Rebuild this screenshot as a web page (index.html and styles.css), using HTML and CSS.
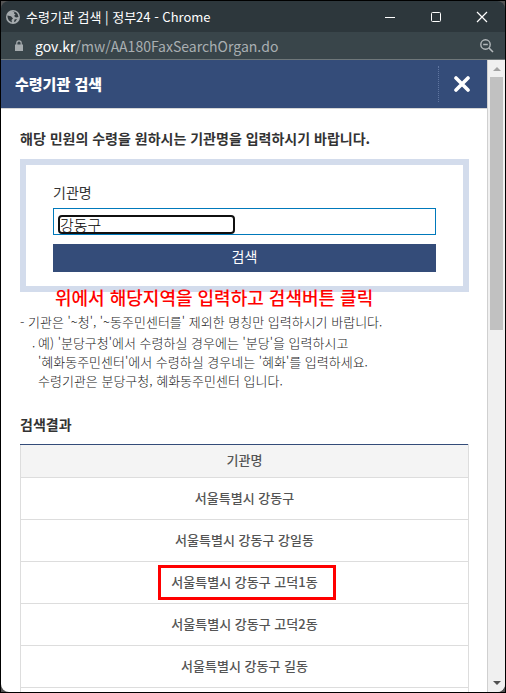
FILE: index.html
```html
<!doctype html>
<html lang="ko">
<head>
  <meta charset="UTF-8">
  <title>수령기관 검색 | 정부24</title>
  <link rel="stylesheet" href="styles.css">
</head>
<body>
  <div class="window">
    <div class="titlebar">
      <svg class="globe" width="14" height="14" viewBox="0 0 14 14">
        <circle cx="7" cy="7" r="7" fill="#a5abae"/>
        <path d="M1.500 5.500L5 6.200L7 8.500L5.500 10L6 12.500Q2 11 1.500 7zM6 1.500L8.500 1.500L8 3.500L9.500 4.500L8 6L10 7.500L12.500 7Q12.500 4 10 2.200zM8.500 9.500L11 9L9.500 11.500L8 12z" fill="#30393e"/>
      </svg>
      <span class="caption">수령기관 검색 | 정부24 - Chrome</span>
      <div class="controls">
        <button type="button" aria-label="최소화"><svg width="12" height="12" viewBox="0 0 12 12"><path d="M1 6.500H11" stroke="#fff"/></svg></button>
        <button type="button" aria-label="최대화"><svg width="12" height="12" viewBox="0 0 12 12"><rect x="1.500" y="1.500" width="9" height="9" rx="1" fill="none" stroke="#fff"/></svg></button>
        <button type="button" aria-label="창 닫기"><svg width="12" height="12" viewBox="0 0 12 12"><path d="M1 1L11 11M11 1L1 11" stroke="#fff" stroke-width="1.200"/></svg></button>
      </div>
    </div>
    <div class="address">
      <svg width="8" height="12" viewBox="0 0 8 12"><path d="M0 4.500h8v6.500h-8z" fill="#a5abae"/><path d="M1.800 5V3a2.200 2.200 0 0 1 4.400 0v2" fill="none" stroke="#a5abae" stroke-width="1.200"/></svg>
      <span class="url"><b>gov.kr</b>/mw/AA180FaxSearchOrgan.do</span>
      <svg class="zoom" width="14" height="14" viewBox="0 0 14 14"><circle cx="5.500" cy="5.500" r="4.700" fill="none" stroke="#b4b9bc" stroke-width="1.400"/><path d="M3.200 5.500h4.600M9 9l4 4" stroke="#b4b9bc" stroke-width="1.600"/></svg>
    </div>

    <div class="view">
      <div class="page">
        <header class="head">
          <h1>수령기관 검색</h1>
          <button type="button" class="close" aria-label="닫기"><svg width="16" height="16" viewBox="0 0 16 16"><path d="M2 2L14 14M14 2L2 14" stroke="#fff" stroke-width="3.600" stroke-linecap="round"/></svg></button>
        </header>
        <main class="content">
          <h2>해당 민원의 수령을 원하시는 기관명을 입력하시기 바랍니다.</h2>
          <form class="search">
            <label for="organ">기관명</label>
            <div class="field"><input type="text" id="organ" value="강동구"></div>
            <button type="button" class="btn">검색</button>
            <p class="memo">위에서 해당지역을 입력하고 검색버튼 클릭</p>
          </form>
          <div class="guide">
            <p>- 기관은 '~청', '~동주민센터를' 제외한 명칭만 입력하시기 바랍니다.</p>
            <p class="sub">예) '분당구청'에서 수령하실 경우에는 '분당'을 입력하시고<br>'혜화동주민센터'에서 수령하실 경우네는 '혜화'를 입력하세요.<br>수령기관은 분당구청, 혜화동주민센터 입니다.</p>
          </div>
          <h2 class="result">검색결과</h2>
          <table class="list">
            <thead>
              <tr><th>기관명</th></tr>
            </thead>
            <tbody>
              <tr><td>서울특별시 강동구</td></tr>
              <tr><td>서울특별시 강동구 강일동</td></tr>
              <tr><td><span class="mark">서울특별시 강동구 고덕1동</span></td></tr>
              <tr><td>서울특별시 강동구 고덕2동</td></tr>
              <tr><td>서울특별시 강동구 길동</td></tr>
              <tr><td></td></tr>
            </tbody>
          </table>
        </main>
      </div>
      <div class="scroll">
        <i class="up"></i>
        <div class="thumb"></div>
        <i class="down"></i>
      </div>
    </div>
  </div>
</body>
</html>
```
FILE: styles.css
```css
*{margin:0;
  padding:0;
  box-sizing:border-box;}
body{background:#555;
     color:#333;
     font-family:"Noto Sans CJK KR",sans-serif;}
button{border:0;
       background:none;
       font-family:inherit;}
svg{display:block;}

/* 브라우저 창 */
.window{height:100vh;
        display:flex;
        flex-direction:column;
        border:1px solid #000;
        overflow:hidden;}
.titlebar{flex:none;
          height:31px;
          display:flex;
          align-items:center;
          padding-left:5px;
          background:#2d373c;
          border-top-right-radius:8px;
          border-top-left-radius:8px;}
.caption{flex:1;
         margin-left:6px;
         color:#fff;
         font:13px/20px "Noto Sans CJK KR",sans-serif;}
.controls{display:flex;}
.controls button{width:46px;
                 height:28px;
                 display:flex;
                 align-items:center;
                 justify-content:center;}
.address{flex:none;
         height:28px;
         display:flex;
         align-items:center;
         padding:0 11px 0 14px;
         background:#39454a;
         border-bottom:1px solid #6f7779;}
.url{flex:1;
     margin-left:12px;
     color:#a9afb2;
     font:14px/20px "Noto Sans CJK KR",sans-serif;}
.url b{color:#fff;
       font-weight:normal;}

.view{flex:1;
      min-height:0;
      display:flex;
      background:#fff;
      border-radius:0 0 8px 8px;
      overflow:hidden;}
.page{flex:1;
      overflow:hidden;}

/* 스크롤바 */
.scroll{width:18px;
        display:flex;
        flex-direction:column;
        align-items:center;
        background:#f0f0f0;
        border-left:1px solid #d0d0d0;}
.up,.down{border:4px solid transparent;}
.up{margin-top:3px;
    border-bottom-color:#a3a3a3;}
.thumb{width:13px;
       height:40%;
       margin-top:6px;
       background:#c1c1c1;}
.down{margin-top:auto;
      margin-bottom:3px;
      border-top-color:#505050;}

.head{height:49px;
      display:flex;
      align-items:center;
      justify-content:space-between;
      padding-left:14px;
      background:#344c79;
      border-bottom:1px solid #d5d5d5;}
.head h1{color:#fff;
         font-size:15px;
         font-weight:900;
         line-height:24px;}
.close{width:49px;
       height:36px;
       display:flex;
       align-items:center;
       justify-content:center;
       padding-right:3px;
       border-left:1px dotted #5f75a0;}

.content{padding:17px 18px 0 19px;}
.content h2{font-size:14px;
            line-height:24px;}
.search{position:relative;
        display:flex;
        flex-direction:column;
        margin-top:9px;
        padding:17px 27px 14px;
        border:6px solid #d3dcec;}
.search label{font-size:14px;
              line-height:20px;}
.field{height:27px;
       margin-top:6px;
       padding:6px 4px 1px;
       border:1px solid #0079bb;}
.field input{display:block;
             width:177px;
             height:19px;
             border:2px solid #101010;
             border-radius:4px;
             background:#fff;
             color:#000;
             font:300 15px/15px "Noto Sans CJK KR",sans-serif;}
.btn{height:28px;
     margin-top:9px;
     padding-bottom:5px;
     background:#344c79;
     color:#fff;
     font-size:14px;
     line-height:20px;}
/* 안내 문구 */
.memo{position:absolute;
      top:120px;
      left:29px;
      color:#f00;
      font-size:18px;
      font-weight:500;
      line-height:24px;
      white-space:nowrap;}

.guide{margin-top:20px;
       color:#222;
       font-size:13px;
       font-weight:300;
       line-height:19px;}
.guide .sub{position:relative;
            margin-top:2px;
            padding-left:18px;}
.sub:before{content:".";
            position:absolute;
            left:12px;}
.content .result{margin-top:22px;}

.list{width:100%;
      margin-top:8px;
      border-collapse:collapse;
      border-top:1px solid #344c79;
      color:#555;
      font-size:13px;
      line-height:20px;}
.list th,.list td{border:1px solid #ddd;
                  padding-bottom:2px;
                  text-align:center;
                  font-weight:500;}
.list th{height:33px;
         border-top-color:#344c79;
         background:#f4f4f4;}
.list td{height:42px;}
.mark{position:relative;}
.mark:after{content:"";
            position:absolute;
            top:-7px;
            right:-18px;
            bottom:-9px;
            left:-13px;
            border:3px solid #f00;}
```
